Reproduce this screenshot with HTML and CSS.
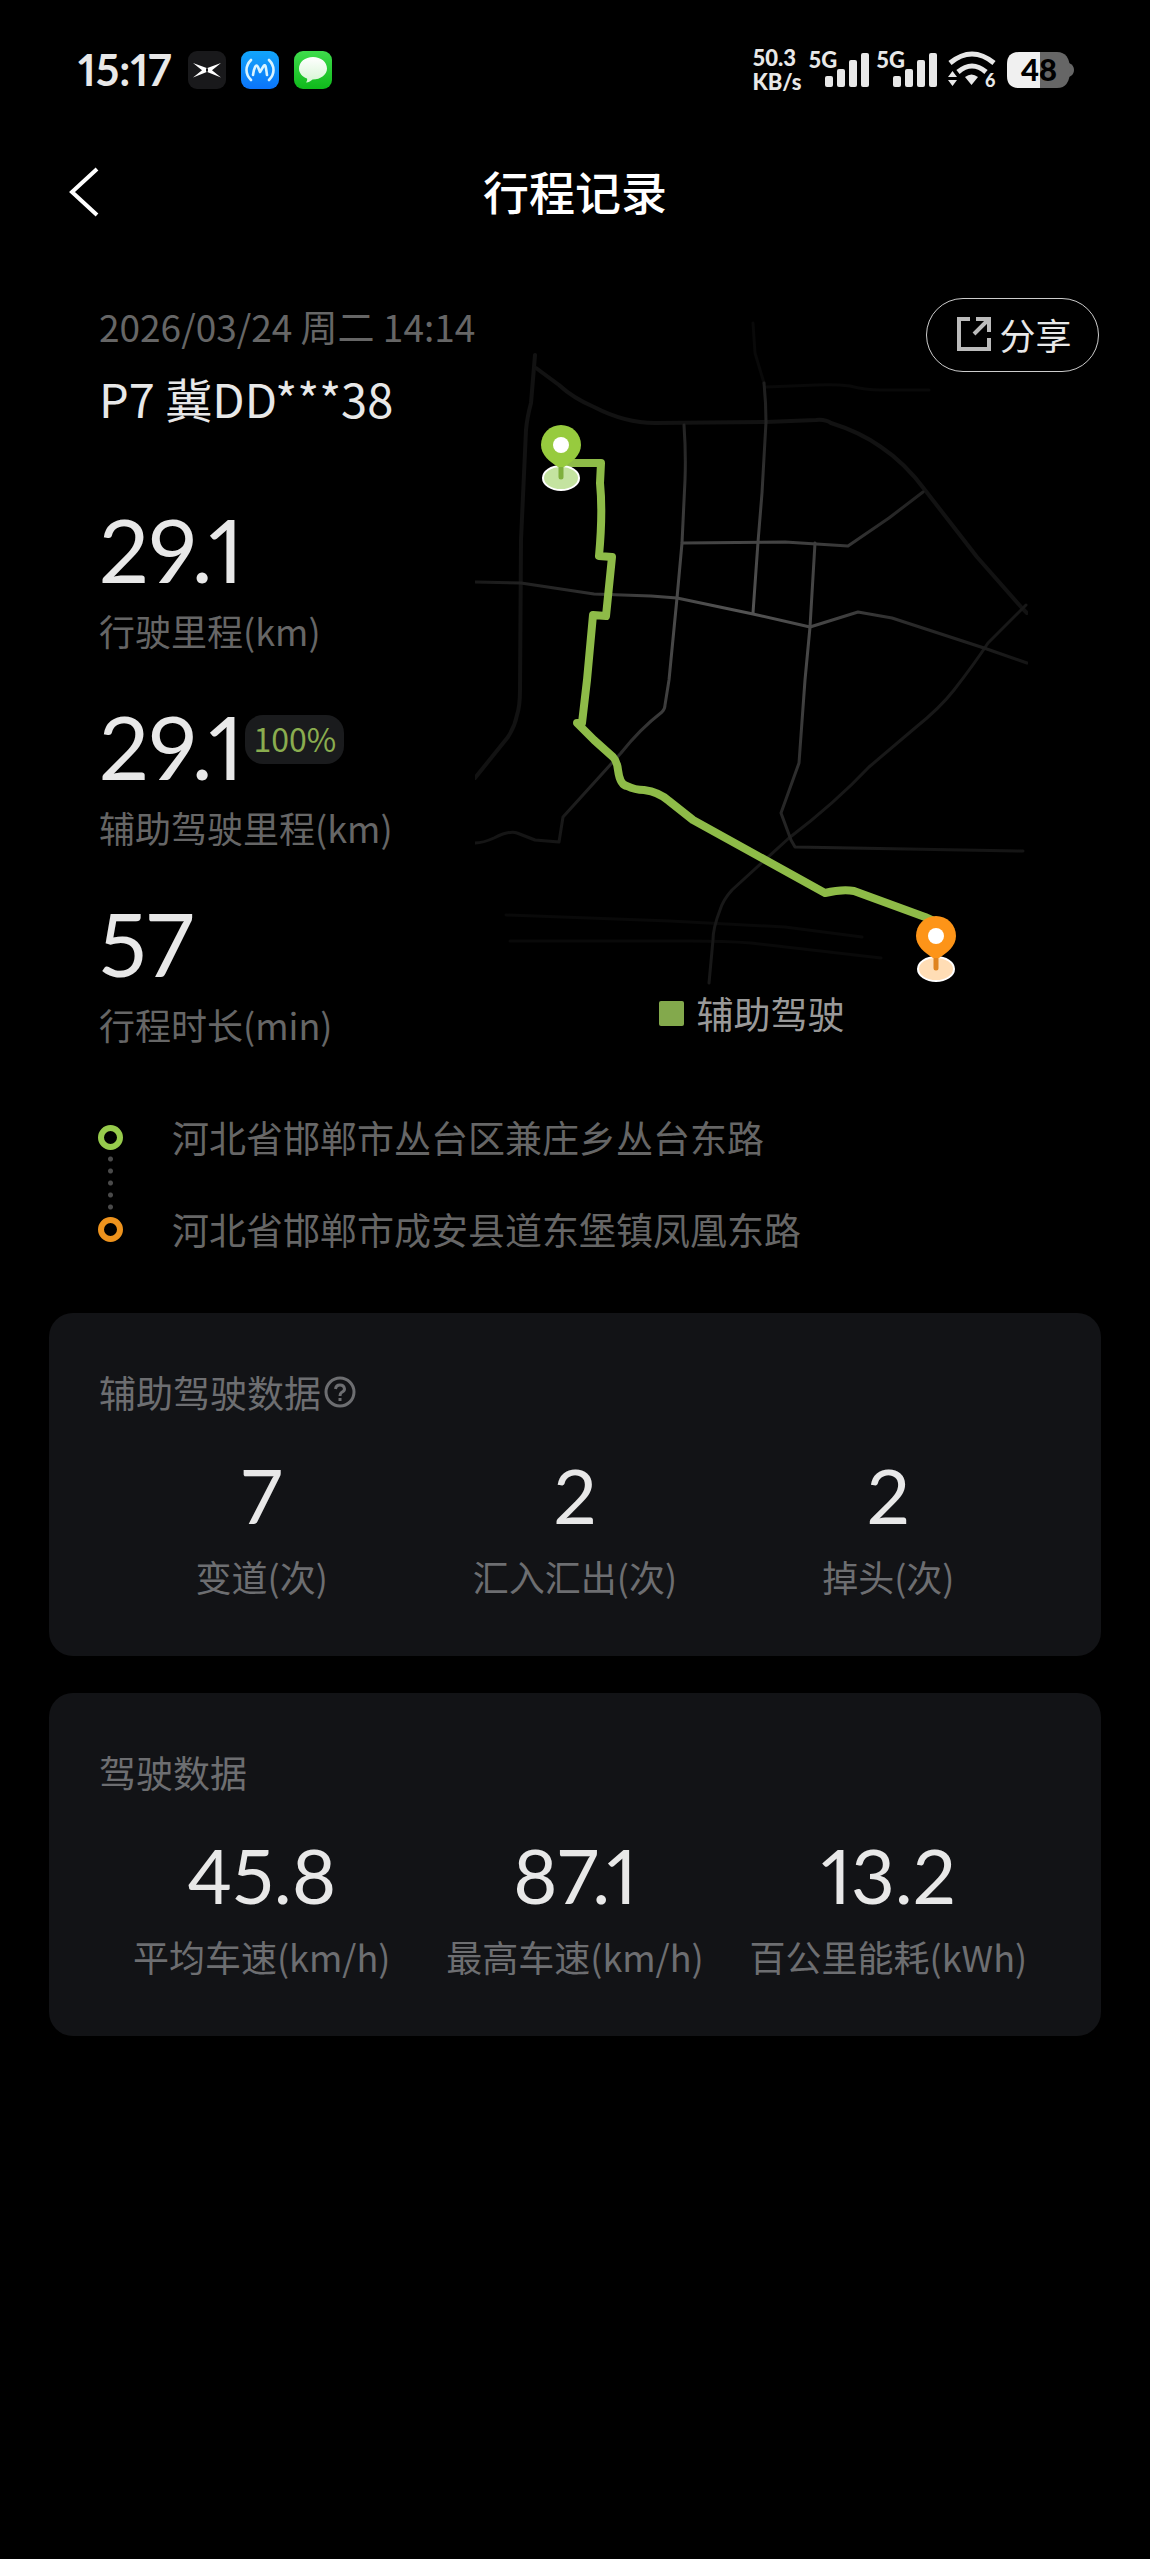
FILE: index.html
```html
<!DOCTYPE html>
<html lang="zh-CN">
<head>
<meta charset="utf-8">
<meta name="viewport" content="width=device-width, initial-scale=1">
<title>行程记录</title>
<link rel="stylesheet" href="styles.css">
</head>
<body>
<div class="status-bar">
  <div class="status-left">
    <span class="clock">15:17</span>
    <svg class="app-icon" viewBox="0 0 38 38" aria-hidden="true">
      <rect width="38" height="38" rx="9" fill="#19191b"/>
      <path d="M5 12 20 17.500 20 20.500 5 26.500 14 19.300Z M33 12 18 17.500 18 20.500 33 26.500 24 19.300Z" fill="#fff"/>
    </svg>
    <svg class="app-icon" viewBox="0 0 38 38" aria-hidden="true">
      <defs><linearGradient id="blue" x2="0" y2="1"><stop stop-color="#12a5fa"/><stop offset="1" stop-color="#0b74fa"/></linearGradient></defs>
      <rect width="38" height="38" rx="9" fill="url(#blue)"/>
      <g fill="none" stroke="#d9f4ff" stroke-width="2.600" stroke-linecap="round" stroke-linejoin="round">
        <path d="M10 9C4 15 4 23 10 29M28 9C34 15 34 23 28 29"/>
        <path d="M12 24C13 17 15 12 17 16L19 21 22 16C25 11 25 18 26 24" />
      </g>
    </svg>
    <svg class="app-icon" viewBox="0 0 38 38" aria-hidden="true">
      <defs>
        <linearGradient id="green" x2="0" y2="1"><stop stop-color="#3fdc4c"/><stop offset="1" stop-color="#0fb91b"/></linearGradient>
        <linearGradient id="bubble" x2="0" y2="1"><stop stop-color="#fff"/><stop offset="1" stop-color="#d5f5d3"/></linearGradient>
      </defs>
      <rect width="38" height="38" rx="9" fill="url(#green)"/>
      <path d="M19 6C11 6 5 11 5 17.500 5 22 8 25.500 13 27.500 13.500 29 13 30 12 31.500 15 31.500 17 30 18.500 28.500 27 28.500 33 23.500 33 17.500 33 11 27 6 19 6Z" fill="url(#bubble)"/>
    </svg>
  </div>
  <div class="status-right">
    <div class="net-speed"><span>50.3</span><span>KB/s</span></div>
    <div class="signal"><span>5G</span>
      <svg viewBox="0 0 44 36" aria-hidden="true"><g fill="#e8e8e8"><rect y="24" width="8" height="11" rx="2"/><rect x="12" y="17" width="8" height="18" rx="2"/><rect x="24" y="8" width="8" height="27" rx="2"/><rect x="36" y="1" width="8" height="34" rx="2"/></g></svg>
    </div>
    <div class="signal"><span>5G</span>
      <svg viewBox="0 0 44 36" aria-hidden="true"><g fill="#e8e8e8"><rect y="24" width="8" height="11" rx="2"/><rect x="12" y="17" width="8" height="18" rx="2"/><rect x="24" y="8" width="8" height="27" rx="2"/><rect x="36" y="1" width="8" height="34" rx="2"/></g></svg>
    </div>
    <svg class="wifi" viewBox="0 0 48 38" aria-hidden="true">
      <g fill="none" stroke="#e8e8e8"><path d="M2 12Q24-6 46 12" stroke-width="5"/><path d="M10 21Q24 9 38 21" stroke-width="5"/></g>
      <path d="M17 26Q23.500 21 30 26L23.500 34Z" fill="#e8e8e8"/>
      <path d="M0 26 4.500 20 9 26ZM0 29 4.500 35 9 29Z" fill="#e8e8e8"/>
      <text x="37" y="36" class="wifi-num">6</text>
    </svg>
    <svg class="battery" viewBox="0 0 67 36" role="img" aria-label="电量 48%">
      <path d="M62 11Q67 13 67 18T62 25Z" fill="#666"/>
      <path d="M33 0H50Q63 0 63 18T50 36H33Z" fill="#666"/>
      <path d="M33 0H12Q0 0 0 12V24Q0 36 12 36H33Z" fill="#f0f0f0"/>
      <text x="32" y="29" class="battery-num">48</text>
    </svg>
  </div>
</div>

<header class="nav">
  <button class="back" type="button" aria-label="返回">
    <svg viewBox="0 0 30 50" aria-hidden="true"><path d="M28 2 3 25 28 48" fill="none" stroke="#fff" stroke-width="4"/></svg>
  </button>
  <h1>行程记录</h1>
</header>

<main>
  <section class="hero">
    <div class="summary">
      <div class="date">2026/03/24 周二 14:14</div>
      <h2 class="vehicle">P7 冀DD***38</h2>
      <dl class="stats">
        <div class="stat"><dt>行驶里程(km)</dt><dd>29.1</dd></div>
        <div class="stat"><dt>辅助驾驶里程(km)</dt><dd>29.1<span class="badge">100%</span></dd></div>
        <div class="stat"><dt>行程时长(min)</dt><dd>57</dd></div>
      </dl>
    </div>
    <div class="map">
      <svg class="map-canvas" viewBox="0 0 553 692" role="img" aria-label="行程路线">
        <defs>
          <radialGradient id="road" gradientUnits="userSpaceOnUse" cx="265" cy="325" r="290">
            <stop stop-color="#555"/><stop offset=".3" stop-color="#444"/><stop offset=".6" stop-color="#292929"/><stop offset="1" stop-color="#151515"/>
          </radialGradient>
        </defs>
        <g fill="none" stroke-linejoin="round" stroke-linecap="round">
          <g stroke="#121212" stroke-width="4">
            <path d="M60 57 56 105Q52 120 51 132L46 242 45 392Q45 408 42 417 40 428 33 439L0 480"/>
            <path d="M61 70 84 87Q98 100 119 109 150 125 180 125L291 124 341 122Q350 121 356 125 385 134 406 149 430 165 450 192L502 259 547 310 552 315"/>
          </g>
          <g stroke="#090909" stroke-width="3">
            <path d="M278 25 280 55 289 85M291 89 341 87Q360 86 375 88 390 92 406 92H454"/>
            <path d="M31 617 195 623 310 629 387 639M35 643H215Q250 643 276 645L406 660"/>
          </g>
          <path d="M551 307 513 345Q500 365 479 392 465 410 440 430L394 469Q360 505 314 540L257 592Q248 602 245 612 238 630 238 642L234 685" stroke="#181818" stroke-width="3"/>
          <g stroke="url(#road)" stroke-width="3">
            <path d="M289 85Q291 105 291 124L287 195 283 244 278 315"/>
            <path d="M209 127Q211 155 210 182L207 245 202 300 194 382 190 407Q190 411 187 414 165 431 146 455L88 519 84 544 60 542 42 535Q35 532 19 540 8 545 0 545"/>
            <path d="M208 245 310 244 373 248 414 220 448 194"/>
            <path d="M340 245 335 329 330 382 324 465 306 515 316 542 320 549 548 553"/>
            <path d="M0 284 46 285 119 296 176 298 202 300 278 316 335 329 383 314 417 320 509 350 552 365"/>
          </g>
          <path d="M86 165H126L125 185Q128 215 124 258L137 259 131 318 118 317 112 382 107 425 102 425 119 442 138 459Q142 463 143 472 145 487 152 488 160 492 169 492 184 494 194 503L218 522 350 595Q367 591 379 593L450 619 461 624" stroke="#8ebb48" stroke-width="8"/>
        </g>
        <g>
          <ellipse cx="86" cy="180" rx="18" ry="12" fill="#c4e3a0" stroke="#fff" stroke-width="2"/>
          <path d="M86 165V179" stroke="#7fb03c" stroke-width="5" stroke-linecap="round"/>
          <path d="M86 127A20 20 0 0 1 106 147C106 157 97 164 89 169H83C75 164 66 157 66 147A20 20 0 0 1 86 127Z" fill="#97cb3e"/>
          <circle cx="86" cy="147" r="8" fill="#fff"/>
        </g>
        <g>
          <ellipse cx="461" cy="671" rx="18" ry="12" fill="#ffddb5" stroke="#fff" stroke-width="2"/>
          <path d="M461 656V670" stroke="#df831e" stroke-width="5" stroke-linecap="round"/>
          <path d="M461 618A20 20 0 0 1 481 638C481 648 472 655 464 660H458C450 655 441 648 441 638A20 20 0 0 1 461 618Z" fill="#fd9418"/>
          <circle cx="461" cy="638" r="8" fill="#fff"/>
        </g>
      </svg>
      <div class="legend"><i></i>辅助驾驶</div>
    </div>
    <button class="share" type="button">
      <svg viewBox="0 0 34 34" aria-hidden="true"><path d="M13 2H2V32H32V21M19 2H32V15M31 3 17 17" fill="none" stroke="#bbb" stroke-width="4"/></svg>分享
    </button>
  </section>

  <ol class="places">
    <li class="start">河北省邯郸市丛台区兼庄乡丛台东路</li>
    <li class="end">河北省邯郸市成安县道东堡镇凤凰东路</li>
  </ol>

  <section class="card">
    <h3>辅助驾驶数据
      <button class="help" type="button" aria-label="说明"><svg viewBox="0 0 32 32" aria-hidden="true"><g fill="none" stroke="#6d6e71" stroke-width="3"><circle cx="16" cy="16" r="14"/><path d="M11.500 13Q12 9 16 9T20.500 13Q20.500 15 17.500 16.500 16 17.500 16 20M16 22V25"/></g></svg></button>
    </h3>
    <dl class="metrics">
      <div><dt>变道(次)</dt><dd>7</dd></div>
      <div><dt>汇入汇出(次)</dt><dd>2</dd></div>
      <div><dt>掉头(次)</dt><dd>2</dd></div>
    </dl>
  </section>

  <section class="card">
    <h3>驾驶数据</h3>
    <dl class="metrics">
      <div><dt>平均车速(km/h)</dt><dd>45.8</dd></div>
      <div><dt>最高车速(km/h)</dt><dd>87.1</dd></div>
      <div><dt>百公里能耗(kWh)</dt><dd>13.2</dd></div>
    </dl>
  </section>
</main>
</body>
</html>
```
FILE: styles.css
```css
*, *::before, *::after { box-sizing: border-box; }
body, h1, h2, h3, dl, dd, ol { margin: 0; padding: 0; }
body {
  min-height: 100vh;
  background: #000;
  color: #e8e8e8;
  font-family: "Noto Sans CJK SC", sans-serif;
  font-size: 37px;
  line-height: 50px;
}
h1, h2, h3 { font-weight: 400; }
button {
  padding: 0;
  border: 0;
  background: none;
  color: inherit;
  font: inherit;
}
svg { display: block; flex: none; }

.status-bar {
  display: flex;
  justify-content: space-between;
  align-items: center;
  height: 140px;
  padding: 0 76px 0 78px;
}
.status-left { display: flex; align-items: center; gap: 15px; }
.clock {
  margin-right: 2px;
  font-family: Lato, sans-serif;
  font-weight: 700;
  font-size: 43px;
  font-variant-numeric: proportional-nums;
}
.app-icon { width: 38px; height: 38px; }
.status-right { display: flex; align-items: center; gap: 7px; }
.net-speed, .signal {
  font-family: Lato, sans-serif;
  font-size: 22px;
  line-height: 24px;
  font-weight: 900;
}
.net-speed { display: flex; flex-direction: column; }
.signal { display: flex; align-items: flex-start; line-height: 16px; }
.signal svg { width: 44px; height: 36px; margin-left: -12px; }
.wifi { width: 48px; height: 38px; margin: 0 4px; overflow: visible; }
.wifi-num { font: 900 18px Lato, sans-serif; fill: #e8e8e8; }
.battery { width: 67px; height: 36px; }
.battery-num { font: 900 31px Lato, sans-serif; text-anchor: middle; fill: #000; }

.nav {
  display: grid;
  grid-template-columns: 1fr auto 1fr;
  align-items: center;
  height: 104px;
  padding: 0 69px;
}
.nav h1 { padding-bottom: 5px; color: #fff; font-size: 46px; font-weight: 500; }
.back svg { width: 30px; height: 50px; }

main { padding: 54px 49px 60px; }
.hero {
  position: relative;
  display: flex;
  align-items: flex-start;
  padding-left: 50px;
}
.summary { width: 376px; flex: none; white-space: nowrap; }
.date { line-height: 56px; color: #666; }
.vehicle { margin-top: 14px; font-size: 47px; line-height: 60px; }
.stats {
  display: flex;
  flex-direction: column;
  gap: 46px;
  margin-top: 76px;
}
.stat { display: flex; flex-direction: column-reverse; gap: 11px; }
dt { color: #666; font-size: 36px; }
dd {
  font-family: Lato, sans-serif;
  font-variant-numeric: proportional-nums;
}
.stat dd {
  display: flex;
  gap: 2px;
  font-size: 88px;
  line-height: 90px;
}
.badge {
  height: 49px;
  margin-top: 14px;
  padding: 0 8px;
  border-radius: 18px;
  background: #1a1b1d;
  color: #8aad4f;
  font-family: "Noto Sans CJK SC", sans-serif;
  font-size: 32px;
  line-height: 47px;
}
.map { flex: 1; margin-right: 73px; }
.map-canvas { width: 100%; height: auto; }
.legend {
  display: flex;
  justify-content: center;
  align-items: center;
  gap: 13px;
  color: #999;
  line-height: 46px;
}
.legend i { width: 25px; height: 25px; border-radius: 2px; background: #83a94c; }
.share {
  position: absolute;
  top: 0;
  right: 2px;
  display: flex;
  justify-content: center;
  align-items: center;
  gap: 8px;
  width: 173px;
  height: 74px;
  padding: 0 0 2px 4px;
  border: 1px solid #ccc;
  border-radius: 37px;
  font-size: 36px;
}
.share svg { width: 34px; height: 34px; }

.places {
  display: grid;
  gap: 42px;
  margin: 63px 0 59px;
  padding-left: 49px;
  color: #666;
  list-style: none;
}
.places li { position: relative; display: flex; align-items: center; gap: 49px; }
.places li::before {
  content: "";
  width: 25px;
  height: 25px;
  border: 6px solid #97cb4c;
  border-radius: 50%;
}
.places .end::before { border-color: #ee931d; }
.places .start::after {
  content: "";
  position: absolute;
  top: 41px;
  left: 10px;
  width: 5px;
  height: 62px;
  background: radial-gradient(circle, #4a4a4a 2px, transparent 3px) 0 0 / 5px 12px repeat-y;
}

.card {
  padding: 54px 56px 55px;
  border-radius: 24px;
  background: #121316;
}
.card + .card { margin-top: 37px; }
.card h3 {
  display: flex;
  align-items: center;
  gap: 3px;
  margin-left: -6px;
  color: #6d6e71;
  font-size: 37px;
}
.help svg { width: 32px; height: 32px; }
.metrics {
  display: grid;
  grid-template-columns: repeat(3, 1fr);
  margin-top: 38px;
  text-align: center;
  white-space: nowrap;
}
.metrics > div { display: flex; flex-direction: column-reverse; gap: 16px; }
.metrics dt { color: #6d6e71; }
.metrics dd { font-size: 76px; line-height: 80px; }
```
